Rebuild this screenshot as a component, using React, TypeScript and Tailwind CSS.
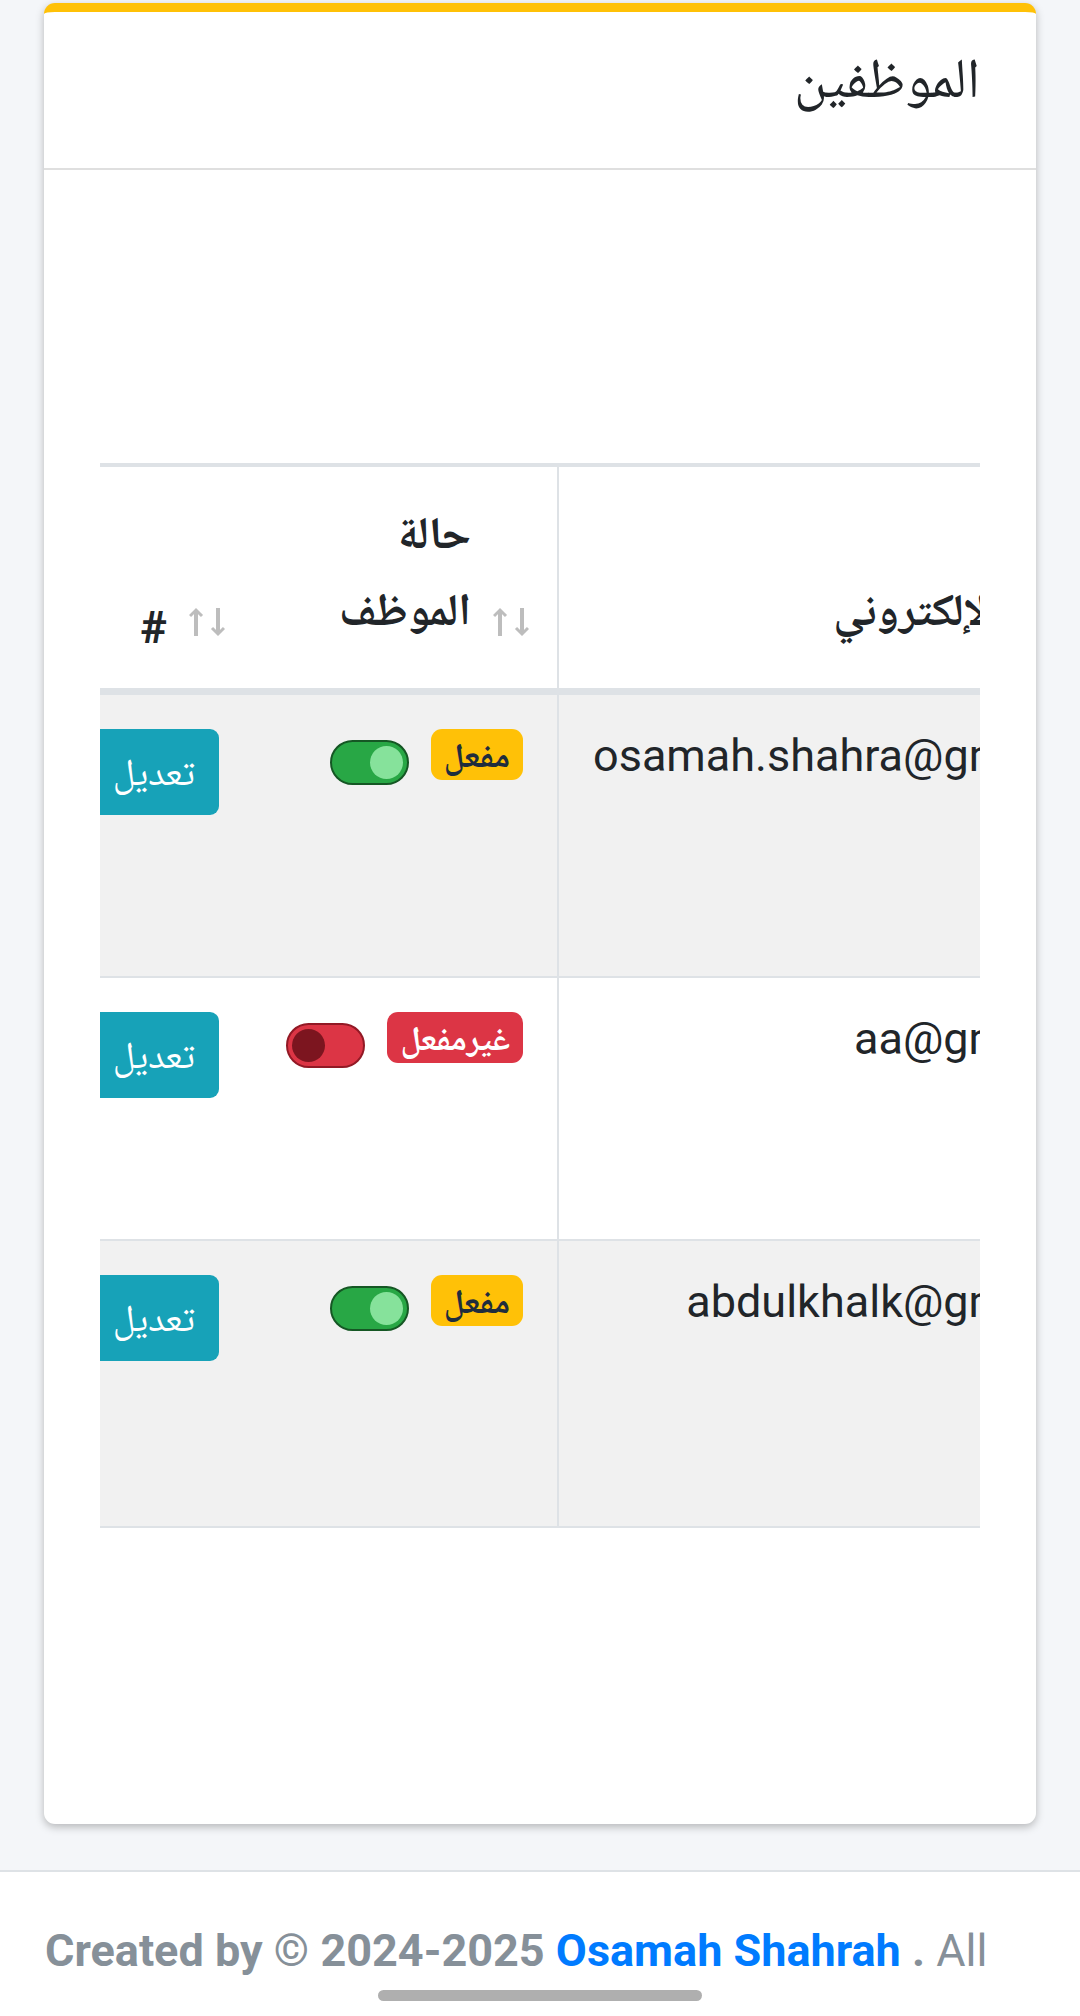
import { useState } from "react";

type Employee = { email: string; active: boolean; height: string };

const EMPLOYEES: Employee[] = [
  { email: "osamah.shahra@gmail.com", active: true, height: "h-[283px]" },
  { email: "aa@gmail.com", active: false, height: "h-[263px]" },
  { email: "abdulkhalk@gmail.com", active: true, height: "h-[287px]" },
];

function SortArrows() {
  return (
    <svg width="36" height="30" viewBox="0 0 36 30" fill="none" stroke="#bdbdbd" aria-hidden="true">
      <path strokeWidth="4" d="M7 29V3M29 1v26" />
      <path strokeWidth="3" d="M1 9 7 3l6 6M23 21l6 6 6-6" />
    </svg>
  );
}

function SortHeader({ label, labelClass }: { label: string; labelClass: string }) {
  return (
    <button type="button" className="flex w-full items-end gap-[22px] text-right font-bold">
      <span className="mb-[11px]">
        <SortArrows />
      </span>
      <span className={labelClass}>{label}</span>
    </button>
  );
}

function EmployeeRow({ employee }: { employee: Employee }) {
  const [active, setActive] = useState(employee.active);
  return (
    <tr className={`${employee.height} align-top odd:bg-[#f1f1f1]`}>
      <td
        dir="ltr"
        className="border-b-2 border-[#dee2e6] px-[34px] pt-[34px] text-right leading-[54px] whitespace-nowrap"
      >
        {employee.email}
      </td>
      <td className="border-r-2 border-b-2 border-[#dee2e6] px-[34px] pt-[34px]">
        <div className="flex items-start gap-[22px]">
          <span
            className={`flex h-[51px] items-center rounded-[11px] px-[13px] text-[34px] leading-none font-bold ${
              active ? "bg-[#ffc107] text-[#1f2d3d]" : "bg-[#dc3545] text-white"
            }`}
          >
            {active ? "مفعل" : "غيرمفعل"}
          </span>
          <input
            type="checkbox"
            role="switch"
            aria-label={employee.email}
            checked={active}
            onChange={() => setActive(!active)}
            className="mt-[11px] flex h-[45px] w-[79px] shrink-0 appearance-none items-center justify-end rounded-full border-2 border-[#921925] bg-[#dc3545] px-1 before:size-[33px] before:rounded-full before:bg-[#7c151f] checked:justify-start checked:border-[#155724] checked:bg-[#28a745] checked:before:bg-[#86e29b]"
          />
        </div>
      </td>
      <td className="border-b-2 border-[#dee2e6] pt-[34px] pr-[34px]">
        <button
          type="button"
          className="block h-[86px] w-full rounded-r-[9px] bg-[#17a2b8] pr-6 text-right text-[38px] text-white"
        >
          تعديل
        </button>
      </td>
    </tr>
  );
}

export default function App() {
  return (
    <div className="flex min-h-screen flex-col bg-[#f4f6f9] font-['Roboto','Noto_Naskh_Arabic','Noto_Sans_Arabic','DejaVu_Sans',sans-serif] text-[45px] text-[#212529]">
      <main className="grow px-11 pt-[3px] pb-[46px]">
        <section
          dir="rtl"
          className="rounded-[11px] border-t-[9px] border-[#ffc107] bg-white shadow-[0_3px_9px_rgba(0,0,0,0.26)]"
        >
          <header className="border-b-2 border-[#dfdfdf] px-14 pt-8 pb-14">
            <h1 className="text-[56px] leading-[68px]">الموظفين</h1>
          </header>
          <div className="px-14 pt-[293px] pb-[296px]">
            <div className="flex justify-end overflow-hidden">
              <table className="w-[calc(100%+209px)] shrink-0 table-fixed border-separate border-spacing-0">
                <colgroup>
                  <col />
                  <col className="w-[306px]" />
                  <col className="w-[153px]" />
                </colgroup>
                <thead>
                  <tr className="align-bottom">
                    <th className="border-t-4 border-b-[7px] border-[#dee2e6] pt-[27px] pr-[28px] pb-10">
                      <SortHeader label="البريد الإلكتروني" labelClass="leading-[77px] whitespace-nowrap" />
                    </th>
                    <th className="border-t-4 border-r-2 border-b-[7px] border-[#dee2e6] pt-[27px] pr-[28px] pb-10">
                      <SortHeader label="حالة الموظف" labelClass="w-min leading-[77px]" />
                    </th>
                    <th className="border-t-4 border-b-[7px] border-[#dee2e6] pt-[27px] pr-[28px] pb-10">
                      <SortHeader label="#" labelClass="leading-[40px]" />
                    </th>
                  </tr>
                </thead>
                <tbody>
                  {EMPLOYEES.map((employee) => (
                    <EmployeeRow key={employee.email} employee={employee} />
                  ))}
                </tbody>
              </table>
            </div>
          </div>
        </section>
      </main>
      <footer className="border-t-2 border-[#dee2e6] bg-white px-[45px] pt-[45px] pb-8 leading-[67px] text-[#869099]">
        <strong className="font-bold">
          Created by © 2024-2025{" "}
          <a href="#" className="text-[#007bff]">
            Osamah Shahrah
          </a>{" "}
          .
        </strong>{" "}
        All
      </footer>
      <div className="fixed bottom-[15px] left-1/2 h-[11px] w-[324px] -translate-x-1/2 rounded-full bg-[#afafaf]" />
    </div>
  );
}
